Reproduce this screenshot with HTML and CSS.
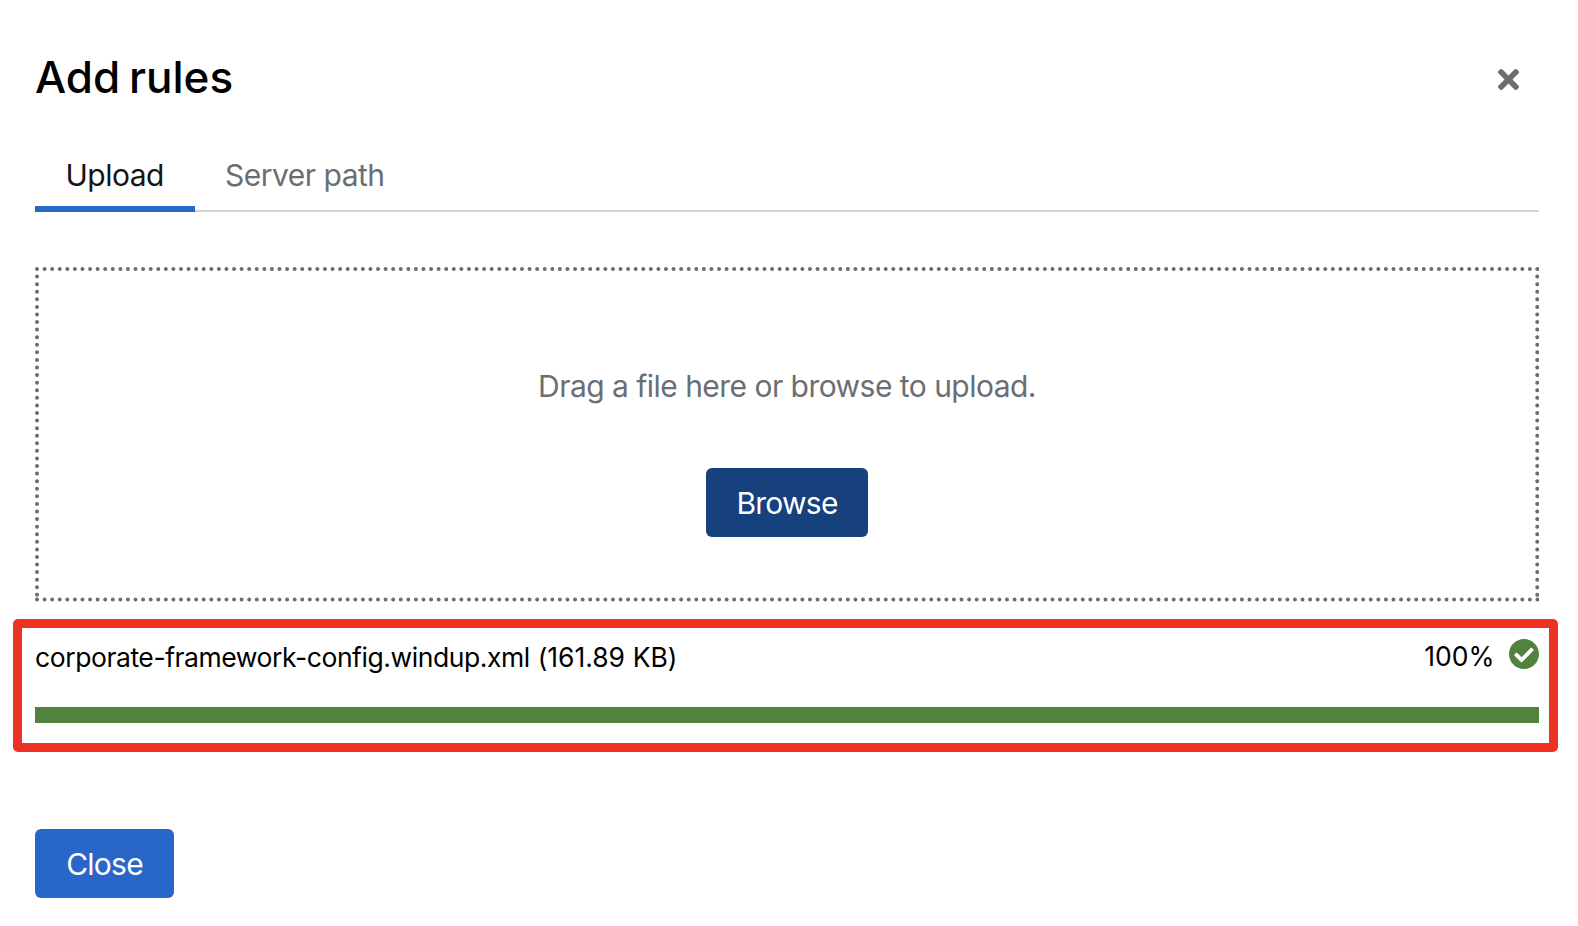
FILE: index.html
```html
<!DOCTYPE html>
<html lang="en">
<head>
<meta charset="utf-8">
<title>Add rules</title>
<link rel="stylesheet" href="styles.css">
</head>
<body>
<main class="modal">
  <header class="modal-header">
    <h1 class="title">Add rules</h1>
    <button class="dismiss" aria-label="Dismiss">
      <svg viewBox="0 80 352 352"><path d="M242.72 256l100.07-100.07c12.28-12.28 12.28-32.19 0-44.48l-22.24-22.24c-12.28-12.28-32.19-12.28-44.48 0L176 189.28 75.93 89.21c-12.28-12.28-32.19-12.28-44.48 0L9.21 111.45c-12.28 12.28-12.28 32.19 0 44.48L109.28 256 9.21 356.07c-12.28 12.28-12.28 32.19 0 44.48l22.24 22.24c12.28 12.28 32.2 12.28 44.48 0L176 322.72l100.07 100.07c12.28 12.28 32.2 12.28 44.48 0l22.24-22.24c12.28-12.28 12.28-32.19 0-44.48L242.72 256z"/></svg>
    </button>
  </header>
  <nav class="tabs">
    <a class="tab active">Upload</a>
    <a class="tab">Server path</a>
  </nav>
  <section class="dropzone">
    <svg class="dots" viewBox="0 0 1504 335"><path d="M2 2H1502.5M2 332.5H1502.5M2 2V332.5M1502.2 2V332.5"/></svg>
    <p class="hint">Drag a file here or browse to upload.</p>
    <button class="button browse">Browse</button>
  </section>
  <section class="progress">
    <div class="progress-info">
      <span class="file"><span class="filename">corporate-framework-config.windup.xml</span> (161.89 KB)</span>
      <span class="status"><span class="percent">100%</span>
        <svg class="check" viewBox="8 8 496 496"><path d="M504 256c0 136.967-111.033 248-248 248S8 392.967 8 256 119.033 8 256 8s248 111.033 248 248zM227.314 387.314l184-184c6.248-6.248 6.248-16.379 0-22.627l-22.627-22.627c-6.248-6.249-16.379-6.249-22.628 0L216 308.118l-70.059-70.059c-6.248-6.248-16.379-6.248-22.628 0l-22.627 22.627c-6.248 6.248-6.248 16.379 0 22.627l104 104c6.249 6.249 16.379 6.249 22.628.001z"/></svg>
      </span>
    </div>
    <div class="bar"></div>
  </section>
  <button class="button close">Close</button>
</main>
</body>
</html>
```

FILE: styles.css
```css
* { box-sizing: border-box; }
body { margin: 0; background: #fff; font-family: Inter, "Liberation Sans", sans-serif; color: #000; }
button { border: 0; padding: 0; font: inherit; background: none; }
.modal { height: 926px; padding: 46px 39px 0 35px; overflow: hidden; }
.modal-header { display: flex; justify-content: space-between; height: 91px; padding-right: 20px; }
.title { margin: 0; font-size: 44px; font-weight: 450; line-height: 62px; letter-spacing: 0; word-spacing: -3px; }
.dismiss { width: 21px; height: 21px; margin-top: 23px; }
.dismiss svg { display: block; width: 21px; height: 21px; fill: #6a6e73; }
.tabs { display: flex; height: 75px; border-bottom: 2px solid #d2d2d2; font-size: 30px; line-height: 77px; letter-spacing: -0.5px; }
.tab { height: 75px; padding-left: 30px; color: #6a6e73; white-space: nowrap; }
.tab.active { width: 160px; padding-left: 30.5px; color: #151515; border-bottom: 6px solid #2867c8; }
.dropzone { position: relative; display: flex; flex-direction: column; align-items: center; height: 335px; margin-top: 55px; padding-top: 94px; }
.dots { position: absolute; inset: 0; width: 1504px; height: 335px; fill: none; stroke: #6a6e73; stroke-width: 4; stroke-linecap: round; stroke-dasharray: 0 7.578; }
.hint { margin: 0; font-size: 30px; line-height: 50px; letter-spacing: -0.53px; color: #6a6e73; white-space: nowrap; }
.button { display: block; height: 69px; border-radius: 6px; color: #fff; font-size: 30px; line-height: 71px; letter-spacing: -0.75px; }
.browse { width: 161.5px; margin-top: 57px; background: #16417c; }
.close { width: 139px; margin-top: 76.5px; background: #2867c8; }
.progress { width: 1545px; height: 133px; margin: 17.4px 0 0 -21.6px; padding: 9px 10.4px 0 12.6px; border: 9px solid #ee3124; border-radius: 5px; }
.progress-info { display: flex; justify-content: space-between; height: 70px; font-size: 26.5px; line-height: 40px; white-space: nowrap; }
.file { margin-top: -0.5px; letter-spacing: -0.05px; word-spacing: 0.5px; }
.filename { letter-spacing: -0.43px; }
.status { display: flex; gap: 16px; margin-top: -1.3px; }
.percent { margin-right: -1.5px; }
.check { width: 30px; height: 30px; margin-top: 3px; fill: #51833f; }
.bar { height: 15.5px; background: #51833f; }
```
